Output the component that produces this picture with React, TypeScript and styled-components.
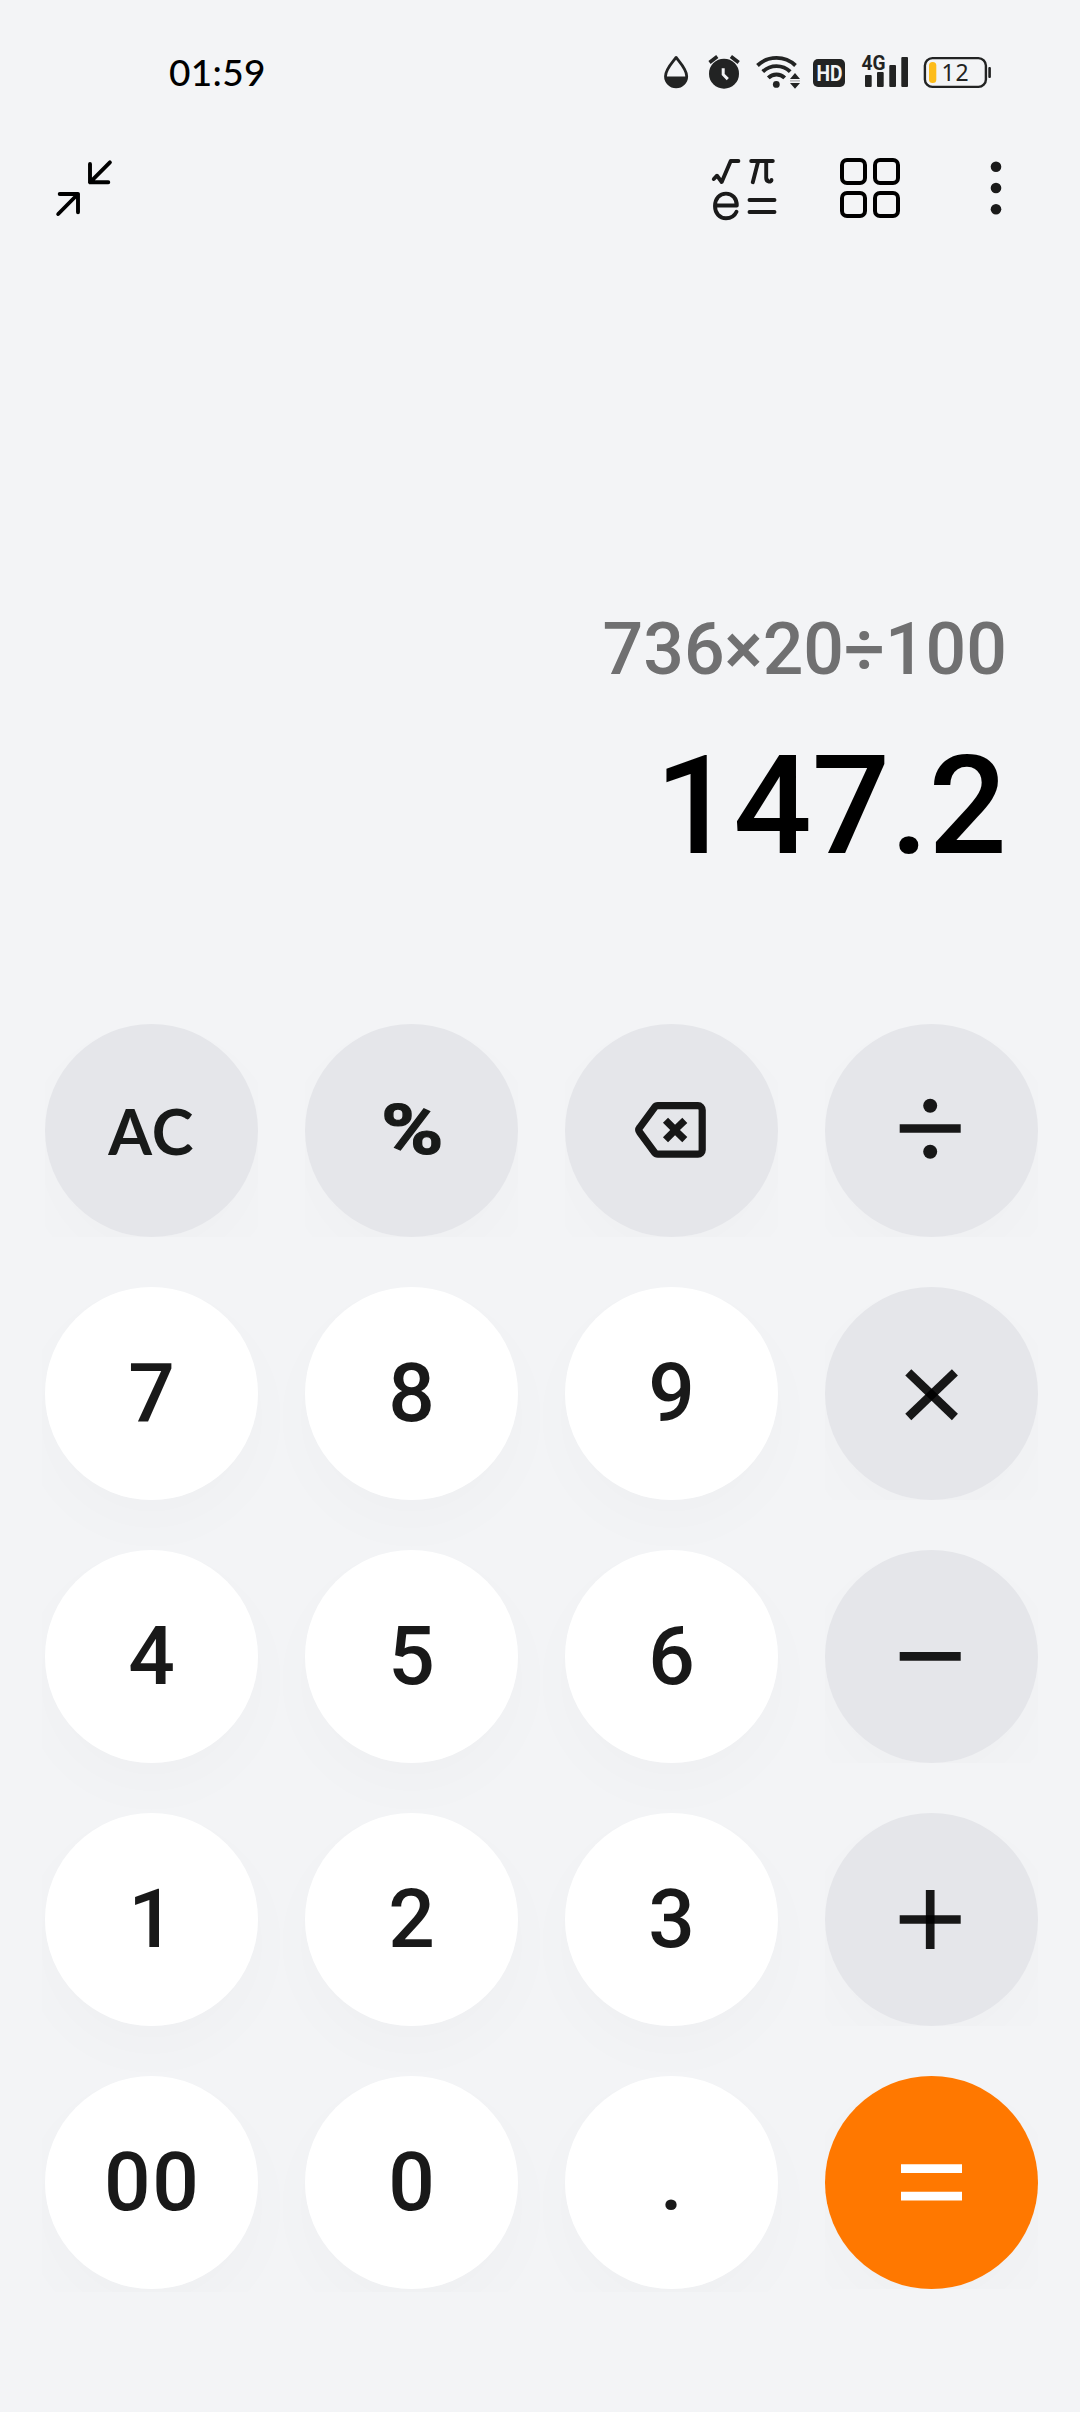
import React from "react";
import styled, { createGlobalStyle, css } from "styled-components";

const INK = "#222323";
const KEY_INK = "rgba(0, 0, 0, 0.9)";

const GlobalStyle = createGlobalStyle`
  *, *::before, *::after { box-sizing: border-box; }
  body { margin: 0; background: #f3f4f6; }
`;

const Screen = styled.main`
  width: 1080px;
  height: 2412px;
  display: flex;
  flex-direction: column;
  background: #f3f4f6;
  font-family: Roboto, "Noto Sans", sans-serif;
  overflow: hidden;
`;

const StatusBar = styled.header`
  height: 140px;
  flex: none;
  display: flex;
  justify-content: space-between;
  padding: 50px 88px 0 169px;
`;

const Clock = styled.time`
  font: 500 37px/44px Lato, "Noto Sans", sans-serif;
  color: #000;
  letter-spacing: 0.3px;
`;

const StatusIcons = styled.div`
  display: flex;
  height: 40px;
`;

const Toolbar = styled.nav`
  height: 100px;
  flex: none;
  display: flex;
  align-items: center;
  padding: 0 64px 0 40px;
`;

const ToolButton = styled.button<{ $before?: string }>`
  display: flex;
  padding: 0;
  border: 0;
  background: none;
  margin-left: ${(p) => p.$before ?? "0"};
`;

const Display = styled.section`
  height: 781px;
  flex: none;
  display: flex;
  flex-direction: column;
  align-items: flex-end;
  padding: 365px 73px 0 0;
  font-weight: 500;
`;

const Expression = styled.div`
  font-size: 71.6px;
  line-height: 90px;
  color: #707071;
`;

const Result = styled.div`
  font-size: 138px;
  line-height: 160px;
  margin-top: 31px;
  color: #000;
`;

const Keypad = styled.section`
  display: grid;
  grid-template-columns: repeat(4, 213px);
  grid-auto-rows: 213px;
  gap: 50px 47px;
  width: 1038px;
  margin-left: 42px;
  padding: 3px 0 3px 3px;
  overflow: hidden;
`;

type Tone = "light" | "grey" | "accent";

const faces: Record<Tone, string> = {
  light: "#ffffff",
  grey: "#e5e6ea",
  accent: "#ff7800",
};

const KeySlot = styled.div<{ $tone: Tone }>`
  position: relative;
  display: grid;
  ${(p) => p.$tone !== "light" && css`overflow: hidden;`}

  &::before {
    content: "";
    position: absolute;
    inset: 0;
    border-radius: 50%;
    box-shadow: 0 24px 64px rgba(20, 30, 40, 0.02);
  }
`;

const Key = styled.button<{ $tone: Tone }>`
  position: relative;
  z-index: 1;
  display: flex;
  align-items: center;
  justify-content: center;
  padding: 0;
  border: 0;
  border-radius: 50%;
  background: ${(p) => faces[p.$tone]};
  color: #191919;
`;

const Digit = styled.span`
  font: 500 82px/96px Roboto, sans-serif;
  letter-spacing: 1.6px;
  margin: 0 0 1px 1.6px;
`;

const ClearLabel = styled.span`
  font: 700 63px/76px Lato, sans-serif;
  letter-spacing: 1.2px;
  color: #181a19;
`;

const PercentLabel = styled.span`
  font: 700 71px/84px Roboto, sans-serif;
  transform: translate(1px, -1px) scaleX(1.19);
  -webkit-text-stroke: 1.2px #181a19;
  color: #181a19;
`;

const Drop = () => (
  <svg width="40" height="40" viewBox="660 50 40 40" fill="none">
    <path d="M676.1 57.4C673.4 61.4 665.5 69 665.5 76.3a10.6 10.6 0 0 0 21.2 0C686.7 69 678.8 61.4 676.1 57.4Z" stroke={INK} strokeWidth="2.8" strokeLinejoin="round" />
    <path d="M665 76.5h22.200a11 11 0 0 1-22.200 0Z" fill={INK} />
  </svg>
);

const Alarm = () => (
  <svg width="50" height="40" viewBox="700 50 50 40" fill="none">
    <circle cx="724" cy="73.7" r="15" fill={INK} />
    <path d="M709.5 62.5l7.8-6M738.7 62.5l-7.8-6" stroke={INK} strokeWidth="3.6" />
    <path d="M723.2 68.3v6.2l4.6 4.6" stroke="#f3f4f6" strokeWidth="3" />
  </svg>
);

const Wifi = () => (
  <svg width="56" height="40" viewBox="750 50 56 40" fill="none">
    <path d="M757.500 65.500a27.500 27.500 0 0 1 38 0M762.800 71.700a19.500 19.500 0 0 1 27.400 0M768.300 77.800a11.800 11.800 0 0 1 16.400 0" stroke={INK} strokeWidth="3.9" />
    <circle cx="776.3" cy="84.4" r="3.4" fill={INK} />
    <path d="M795 73l5 5.900h-10ZM795 88.700l5-5.700h-10Z" fill={INK} />
    <path d="M790 80.900h10" stroke={INK} strokeWidth="1" opacity=".4" />
  </svg>
);

const HdBadge = () => (
  <svg width="48" height="40" viewBox="806 50 48 40">
    <rect x="813" y="59" width="32" height="28" rx="5" fill={INK} />
    <text x="816.5" y="81" fontFamily="Roboto, sans-serif" fontWeight="700" fontSize="22.5" textLength="26" lengthAdjust="spacingAndGlyphs" fill="#f3f4f6">HD</text>
  </svg>
);

const Signal = () => (
  <svg width="62" height="40" viewBox="854 50 62 40" fill={INK}>
    <text x="861.5" y="70.3" fontFamily="Roboto, sans-serif" fontWeight="700" fontSize="21" textLength="24" lengthAdjust="spacingAndGlyphs">4G</text>
    <rect x="865" y="75" width="6.7" height="12" rx="1" />
    <rect x="877" y="72" width="6.7" height="15" rx="1" />
    <rect x="889.3" y="65" width="6.7" height="22" rx="1" />
    <rect x="901.3" y="57" width="6.7" height="30" rx="1" />
  </svg>
);

const Battery = () => (
  <svg width="76" height="40" viewBox="916 50 76 40">
    <rect x="924.9" y="58.1" width="61" height="28.8" rx="7.5" fill="none" stroke={INK} strokeWidth="2.4" />
    <rect x="988.3" y="67" width="2.6" height="11" rx="1" fill={INK} />
    <rect x="929" y="62" width="7.3" height="21" rx="3.5" fill="#fdbc1a" />
    <text x="941.5" y="80.9" fontFamily="'Noto Sans', sans-serif" fontSize="23" letterSpacing="0.8" fill={INK}>12</text>
  </svg>
);

const CollapseIcon = () => (
  <svg width="100" height="100" viewBox="40 140 100 100" fill="none" stroke="#000" strokeWidth="3.9" strokeLinecap="round" strokeLinejoin="round">
    <path d="M90 164v18.300h18.300M90 182.300l19.900-20" />
    <path d="M59.700 194H78v18.300M78 194l-19.800 20" />
  </svg>
);

const FormulaIcon = () => (
  <svg width="100" height="100" viewBox="700 140 100 100" fill="none" stroke="#1a1a1a" strokeWidth="3.9" strokeLinecap="round" strokeLinejoin="round">
    <path d="M713.800 179l3.200-3.300 4.700 6.300 9-21h7.700" />
    <path d="M751.200 161h21.600M758 162l-5.200 20.200M766.200 162v16c0 4.500 5.300 4.200 5.300 1.900" />
    <path d="M715.500 205.500h21.300c0-7.300-4.400-11.900-10.800-11.900s-11 5-11 12.400 4.600 12.200 11 12.200c4.800 0 8.600-2.300 10.500-6.500" />
    <path d="M749.500 200h25M749.500 212h25" />
  </svg>
);

const GridIcon = () => (
  <svg width="100" height="100" viewBox="820 140 100 100" fill="none" stroke="#000" strokeWidth="4">
    <rect x="842" y="160" width="23" height="23" rx="5" />
    <rect x="875" y="160" width="23" height="23" rx="5" />
    <rect x="842" y="193" width="23" height="23" rx="5" />
    <rect x="875" y="193" width="23" height="23" rx="5" />
  </svg>
);

const MoreIcon = () => (
  <svg width="40" height="100" viewBox="976 140 40 100" fill="#1a1a1a">
    <circle cx="996" cy="166.7" r="5.3" />
    <circle cx="996" cy="188" r="5.3" />
    <circle cx="996" cy="209.3" r="5.3" />
  </svg>
);

const KeyIcon = styled.svg.attrs({ viewBox: "0 0 213 213", width: 213, height: 213 })<{ $weight?: number }>`
  display: block;
  fill: none;
  stroke: ${KEY_INK};
  stroke-width: ${(p) => p.$weight ?? 8.7}px;
`;

const Backspace = () => (
  <KeyIcon $weight={7.2}>
    <path d="M92.800 81.700H133a4.200 4.200 0 0 1 4.200 4.200v40a4.200 4.200 0 0 1-4.200 4.200H92.800a4 4 0 0 1-3.200-1.600L74.700 108.300a3.800 3.800 0 0 1 0-4.700L89.600 83.300a4 4 0 0 1 3.200-1.600Z" />
    <path d="M100.500 96.300L110 105.800L119.800 96.300M100.500 115.700L110 106.200L119.800 115.700M107.500 106h5" />
  </KeyIcon>
);

const Divide = () => (
  <KeyIcon>
    <path d="M74.700 104.500h61" />
    <circle cx="105.200" cy="81.700" r="7" fill={KEY_INK} stroke="none" />
    <circle cx="105.200" cy="127.700" r="7" fill={KEY_INK} stroke="none" />
  </KeyIcon>
);

const Multiply = () => (
  <KeyIcon>
    <path d="M83.300 85.300L129.900 130" />
    <path d="M129.900 85.300L83.300 130" />
  </KeyIcon>
);

const Minus = () => (
  <KeyIcon>
    <path d="M74.700 106.300h61" />
  </KeyIcon>
);

const Plus = () => (
  <KeyIcon>
    <path d="M74.700 106.500h61" />
    <path d="M105.200 77v59" />
  </KeyIcon>
);

const EqualsKeyIcon = styled(KeyIcon)`
  stroke: #fff;
`;

const Equals = () => (
  <EqualsKeyIcon>
    <path d="M76 92.600h61M76 120.200h61" />
  </EqualsKeyIcon>
);

interface KeySpec {
  name: string;
  tone: Tone;
  face: React.ReactNode;
}

const digit = (value: string): KeySpec => ({ name: value, tone: "light", face: <Digit>{value}</Digit> });
const operator = (name: string, face: React.ReactNode, tone: Tone = "grey"): KeySpec => ({ name, tone, face });

const keys: KeySpec[] = [
  operator("clear", <ClearLabel>AC</ClearLabel>),
  operator("percent", <PercentLabel>%</PercentLabel>),
  operator("backspace", <Backspace />),
  operator("divide", <Divide />),
  digit("7"), digit("8"), digit("9"),
  operator("multiply", <Multiply />),
  digit("4"), digit("5"), digit("6"),
  operator("minus", <Minus />),
  digit("1"), digit("2"), digit("3"),
  operator("plus", <Plus />),
  digit("00"), digit("0"), digit("."),
  operator("equals", <Equals />, "accent"),
];

export default function App() {
  return (
    <>
      <GlobalStyle />
      <Screen>
        <StatusBar>
          <Clock>01:59</Clock>
          <StatusIcons>
            <Drop />
            <Alarm />
            <Wifi />
            <HdBadge />
            <Signal />
            <Battery />
          </StatusIcons>
        </StatusBar>
        <Toolbar>
          <ToolButton><CollapseIcon /></ToolButton>
          <ToolButton $before="auto"><FormulaIcon /></ToolButton>
          <ToolButton $before="20px"><GridIcon /></ToolButton>
          <ToolButton $before="56px"><MoreIcon /></ToolButton>
        </Toolbar>
        <Display>
          <Expression>736×20÷100</Expression>
          <Result>147.2</Result>
        </Display>
        <Keypad>
          {keys.map((key) => (
            <KeySlot key={key.name} $tone={key.tone}>
              <Key $tone={key.tone}>{key.face}</Key>
            </KeySlot>
          ))}
        </Keypad>
      </Screen>
    </>
  );
}
